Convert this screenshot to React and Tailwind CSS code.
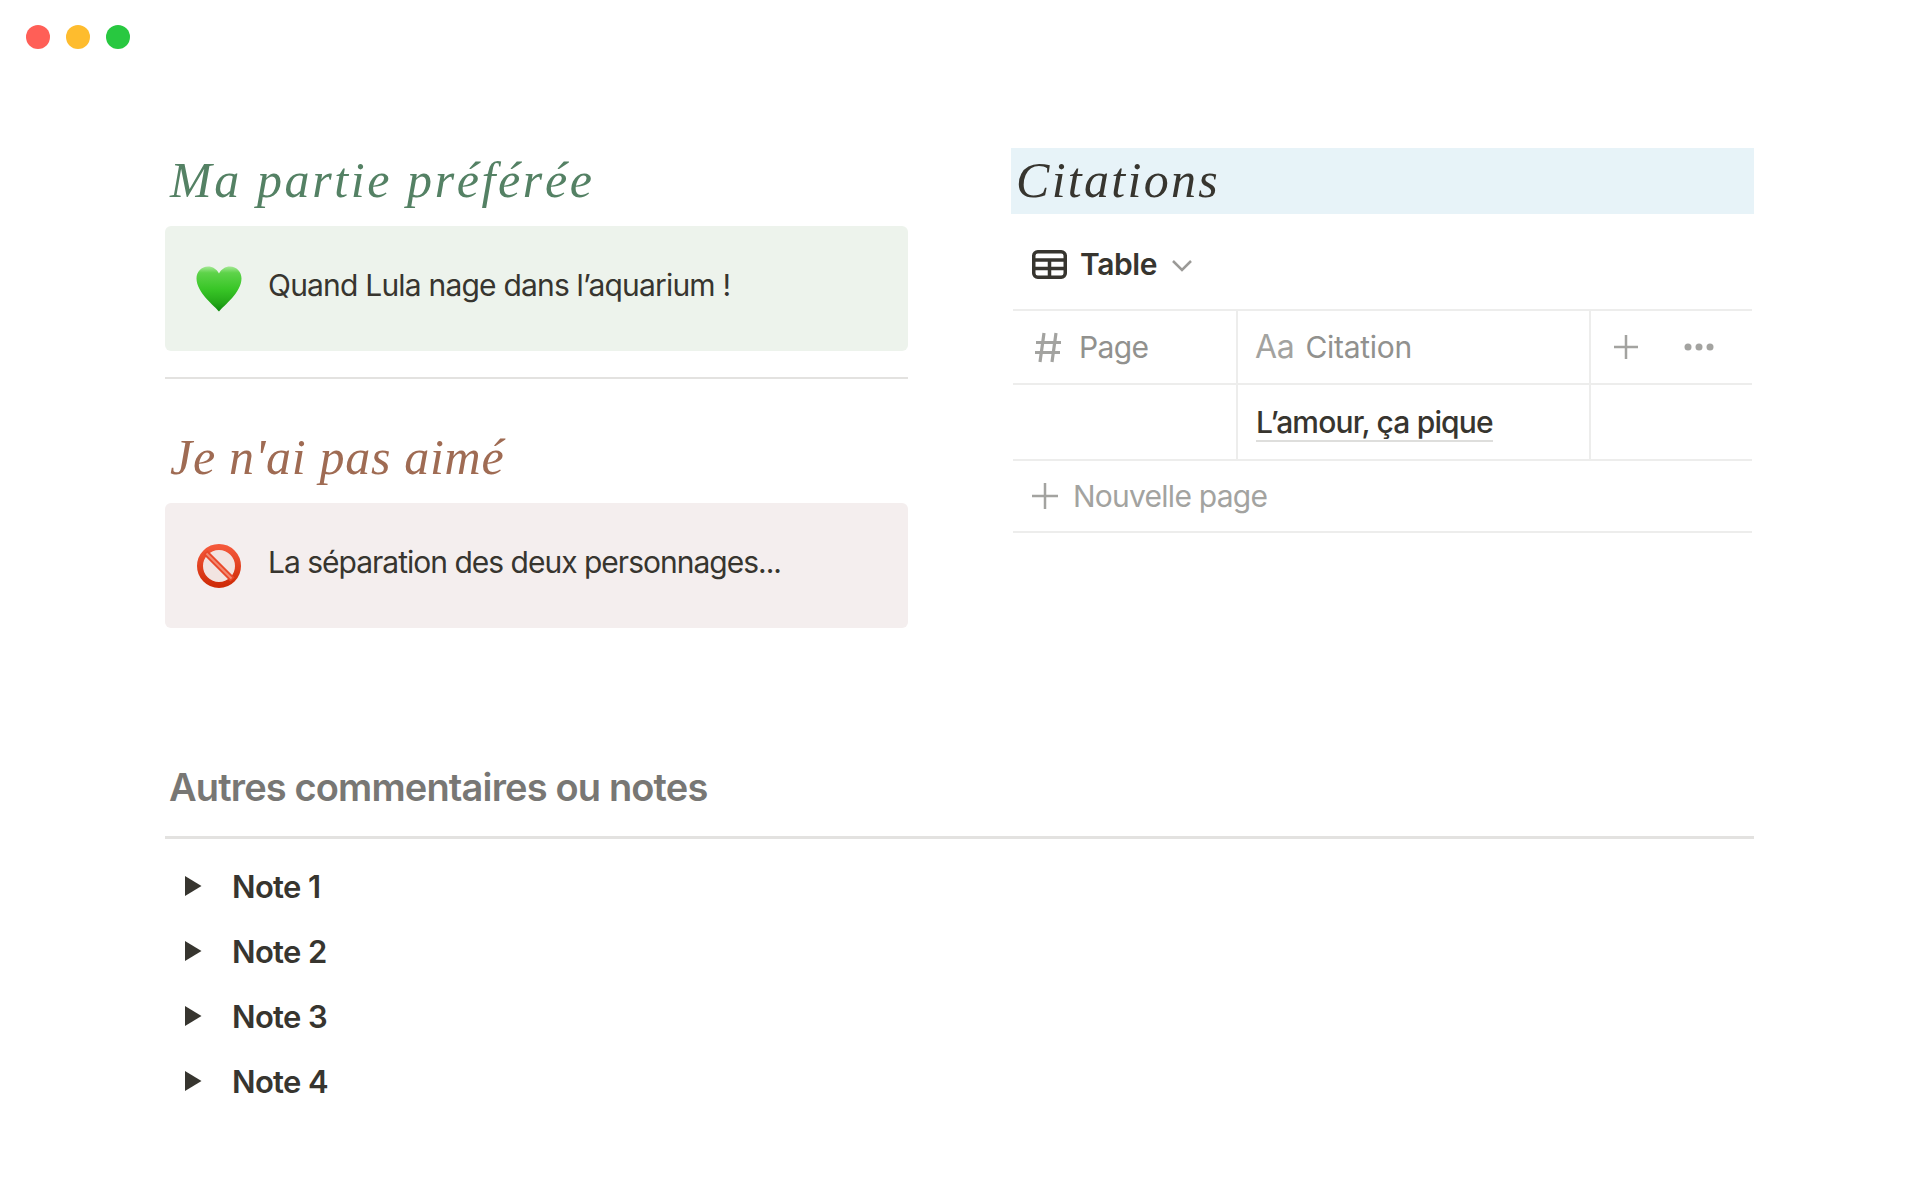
import React from "react";

const Heart = () => (
  <svg width="48" height="48" viewBox="0 0 48 48" className="shrink-0">
    <defs>
      <linearGradient id="hg" x1="0" y1="0" x2="0" y2="1">
        <stop offset="0" stopColor="#a4e894" />
        <stop offset="0.14" stopColor="#5ed34a" />
        <stop offset="0.5" stopColor="#39c627" />
        <stop offset="0.8" stopColor="#25a919" />
        <stop offset="1" stopColor="#0d8a0c" />
      </linearGradient>
    </defs>
    <path d="M24 46.5C19.5 41 1.5 27.5 1.5 13.5 1.5 6.5 6.5 1.5 13 1.5c4.800 0 8.800 2.700 11 7 2.200-4.300 6.200-7 11-7 6.500 0 11.500 5 11.500 12 0 14-18 27.500-22.500 33z" fill="url(#hg)" />
  </svg>
);

const NoEntry = () => (
  <svg width="48" height="48" viewBox="0 0 48 48" className="shrink-0">
    <defs>
      <linearGradient id="ng" x1="0" y1="0" x2="0" y2="1">
        <stop offset="0" stopColor="#f4583a" />
        <stop offset="1" stopColor="#cf2c08" />
      </linearGradient>
    </defs>
    <circle cx="24" cy="24" r="19" fill="#f2e4e1" stroke="url(#ng)" strokeWidth="6" />
    <path d="M10.500 10.500 37.500 37.500" stroke="#e9482a" strokeWidth="6" />
    <path d="M11.500 11.500 36.500 36.500" stroke="#f28a72" strokeWidth="2" />
  </svg>
);

const Callout = ({ bg, icon, tracking, children }) => (
  <div className={`flex h-[125px] items-start gap-[25px] rounded-[6px] pl-[30px] pt-[39px] ${bg}`}>
    {icon}
    <span className={`mt-[-2px] text-[30px] leading-[45px] text-[#37352f] ${tracking}`}>{children}</span>
  </div>
);

const Caret = () => (
  <svg width="17" height="20" viewBox="0 0 17 20" className="mt-[-3px] shrink-0">
    <path d="M0 0 16.5 10 0 20z" fill="#37352f" />
  </svg>
);

const Note = ({ n }) => (
  <div className="flex h-[65px] items-center pl-[20px]">
    <Caret />
    <span className="ml-[30px] text-[31px] font-semibold tracking-[-0.65px] text-[#37352f]">Note {n}</span>
  </div>
);

export default function App() {
  return (
    <div className="h-[1200px] w-[1920px] bg-white font-['Inter',sans-serif]">
      <div className="flex gap-4 pl-[26px] pt-[25px]">
        <div className="h-6 w-6 rounded-full bg-[#ff5f57]" />
        <div className="h-6 w-6 rounded-full bg-[#febc2e]" />
        <div className="h-6 w-6 rounded-full bg-[#28c840]" />
      </div>

      <div className="mt-[99px] flex gap-[103px] pl-[165px]">
        <div className="w-[743px]">
          <h2 className="h-[78px] pl-[5px] font-['Liberation_Serif',serif] text-[50px] leading-[64px] italic tracking-[2.6px] text-[#548164]">
            Ma partie préférée
          </h2>
          <Callout bg="bg-[#edf3ec]" icon={<Heart />} tracking="tracking-[-0.8px]">Quand Lula nage dans l’aquarium !</Callout>
          <div className="mt-[26px] h-[2px] bg-[#e3e2e0]" />
          <h2 className="mt-[45px] h-[79px] pl-[5px] font-['Liberation_Serif',serif] text-[50px] leading-[66px] italic tracking-[0.7px] text-[#9f6b53]">
            Je n'ai pas aimé
          </h2>
          <Callout bg="bg-[#f4eeee]" icon={<NoEntry />} tracking="tracking-[-1px]">La séparation des deux personnages...</Callout>
        </div>

        <div className="w-[743px]">
          <h2 className="h-[66px] bg-[#e7f3f8] pl-[5px] font-['Liberation_Serif',serif] text-[50px] leading-[64px] italic tracking-[2.3px] text-[#37352f]">
            Citations
          </h2>
          <div className="flex h-[95px] items-center pl-[21px] pt-[6px]">
            <svg width="35" height="29" viewBox="0 0 35 29" fill="none" stroke="#37352f" strokeWidth="3.5" className="shrink-0">
              <rect x="1.750" y="1.750" width="31.500" height="25.500" rx="4" />
              <path d="M1.750 10h31.500M1.750 18.500h31.500M17.500 10V27" />
            </svg>
            <span className="ml-[13px] text-[30px] font-semibold tracking-[-0.4px] text-[#37352f]">Table</span>
            <svg width="20" height="12" viewBox="0 0 20 12" fill="none" stroke="#9b9a97" strokeWidth="2.500" className="ml-[15px] mt-[2px]">
              <path d="M1 1l9 9 9-9" />
            </svg>
          </div>

          <div className="mx-[2px] border-t-2 border-[#ededec]">
            <div className="grid h-[74px] grid-cols-[225px_353px_1fr] border-b-2 border-[#ededec] text-[30px] tracking-[-0.3px] text-[#91918e]">
              <div className="flex items-center pl-[21px] border-r-2 border-[#ededec]">
                <svg width="28" height="31" viewBox="0 0 28 31" fill="none" stroke="#a3a3a0" strokeWidth="3.200" className="shrink-0">
                  <path d="M10 1 6 30M22 1 18 30M2 10.500h25M1 20.500h25" />
                </svg>
                <span className="ml-[17px] tracking-[-0.6px]">Page</span>
              </div>
              <div className="flex items-center pl-[17px] border-r-2 border-[#ededec]">
                <span className="text-[32px] text-[#a3a3a0]">Aa</span>
                <span className="ml-[11px]">Citation</span>
              </div>
              <div className="flex items-center pl-[22px]">
                <svg width="26" height="26" viewBox="0 0 26 26" stroke="#a3a3a0" strokeWidth="2.5">
                  <path d="M13 1v24M1 13h24" />
                </svg>
                <svg width="30" height="8" viewBox="0 0 30 8" fill="#a3a3a0" className="ml-[45px]">
                  <circle cx="4" cy="4" r="3.5" />
                  <circle cx="15" cy="4" r="3.5" />
                  <circle cx="26" cy="4" r="3.5" />
                </svg>
              </div>
            </div>
            <div className="grid h-[76px] grid-cols-[225px_353px_1fr] border-b-2 border-[#ededec]">
              <div className="border-r-2 border-[#ededec]" />
              <div className="flex items-center pl-[18px] pt-[2px] border-r-2 border-[#ededec]">
                <span className="border-b-2 border-[#dededc] text-[30px] font-medium leading-[36px] tracking-[-0.85px] text-[#37352f]">L’amour, ça pique</span>
              </div>
              <div />
            </div>
            <div className="flex h-[72px] items-center border-b-2 border-[#ededec] pl-[18px] text-[30px] tracking-[-0.75px] text-[#a3a3a0]">
              <svg width="28" height="28" viewBox="0 0 28 28" stroke="#a3a3a0" strokeWidth="2.5" className="shrink-0">
                <path d="M14 1v26M1 14h26" />
              </svg>
              <span className="ml-[14px]">Nouvelle page</span>
            </div>
          </div>
        </div>
      </div>

      <div className="ml-[165px] mt-[128px] w-[1589px]">
        <h3 className="h-[83px] border-b-[3px] border-[#e3e2e0] pl-[4px] text-[38px] font-semibold leading-[62px] tracking-[-0.85px] text-[#787774]">
          Autres commentaires ou notes
        </h3>
        <div className="pt-[16px]">
          <Note n={1} />
          <Note n={2} />
          <Note n={3} />
          <Note n={4} />
        </div>
      </div>
    </div>
  );
}
